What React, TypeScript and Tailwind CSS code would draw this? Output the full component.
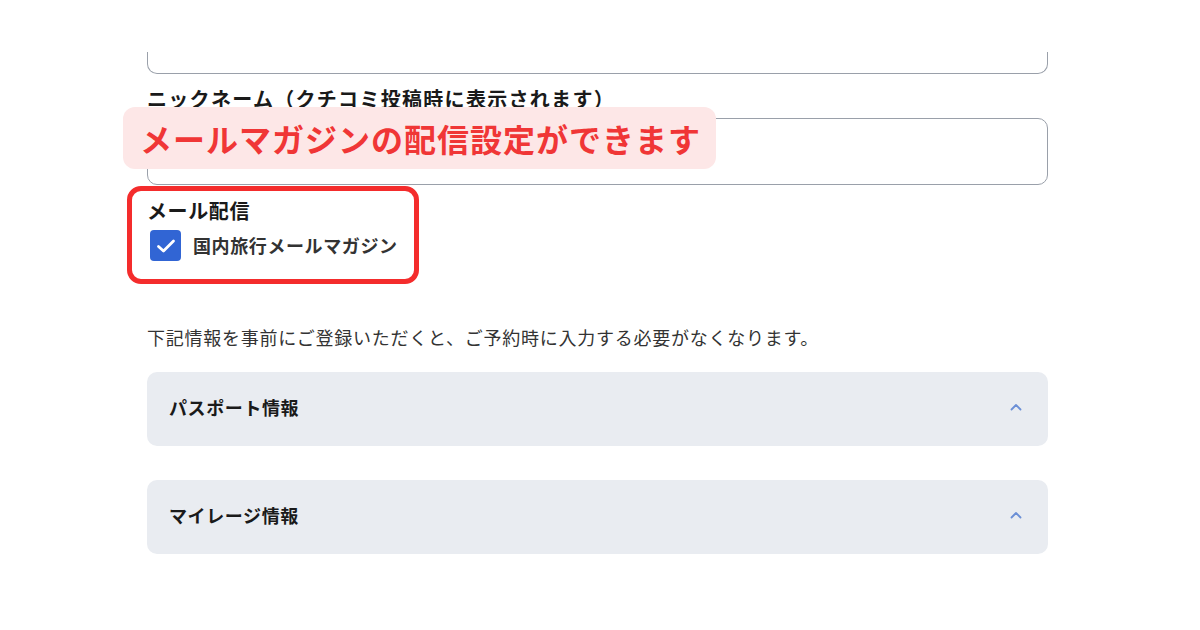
import React from "react";

const font = { fontFamily: '"Noto Sans CJK JP", "Noto Sans", sans-serif' };

function Chevron() {
  return (
    <svg width="12" height="8" viewBox="0 0 12 8" fill="none">
      <path d="M1.5 6.5 L6 2 L10.5 6.5" stroke="#6b8fd6" strokeWidth="1.8" strokeLinecap="round" strokeLinejoin="round" />
    </svg>
  );
}

function Accordion({ title }: { title: string }) {
  return (
    <div className="flex h-[74px] items-center justify-between rounded-[10px] bg-[#e9ecf1] pb-[4px] pl-[22px] pr-[26px]">
      <span className="text-[18px] font-bold leading-[24px] tracking-[0.6px] text-[#1a1a1a]">{title}</span>
      <Chevron />
    </div>
  );
}

export default function App() {
  return (
    <div className="h-[630px] w-[1200px] overflow-hidden bg-white" style={font}>
      <div className="relative ml-[147px] w-[901px] pt-[52px]">
        <div className="h-[22px] rounded-b-[10px] border-x border-b border-[#9aa0aa]" />
        <div className="mt-[12px] text-[20px] font-bold leading-[26px] tracking-[1.3px] text-[#1a1a1a]">
          ニックネーム（クチコミ投稿時に表示されます）
        </div>
        <div className="mt-[6px] h-[67px] rounded-[10px] border border-[#9aa0aa]" />

        <div className="relative mt-[13px]">
          <div className="text-[20px] font-bold leading-[26px] tracking-[0.6px] text-[#1a1a1a]">メール配信</div>
          <div className="mt-[6px] flex items-center gap-[12px] pl-[3px]">
            <div className="flex h-[31px] w-[31px] items-center justify-center rounded-[4px] bg-[#3165d4]">
              <svg width="20" height="16" viewBox="0 0 20 16" fill="none">
                <path d="M2.5 8.5 L7.5 13 L17.5 3" stroke="white" strokeWidth="2.8" strokeLinecap="round" strokeLinejoin="round" />
              </svg>
            </div>
            <span className="text-[18px] font-bold tracking-[0.6px] text-[#333]">国内旅行メールマガジン</span>
          </div>
          <div className="pointer-events-none absolute -left-[20px] -top-[12px] h-[98px] w-[292px] rounded-[14px] border-[5px] border-[#f42c2c]" />
        </div>

        <p className="mt-[64px] text-[18px] leading-[24px] tracking-[0.75px] text-[#333]">
          下記情報を事前にご登録いただくと、ご予約時に入力する必要がなくなります。
        </p>

        <div className="mt-[23px] flex flex-col gap-[34px]">
          <Accordion title="パスポート情報" />
          <Accordion title="マイレージ情報" />
        </div>

        <div className="absolute -left-[24px] top-[107px] flex h-[62px] w-[593px] items-center rounded-[12px] bg-[#fde7e7] pl-[17px]">
          <span className="text-[32px] font-bold tracking-[1px] text-[#f03636]">メールマガジンの配信設定ができます</span>
        </div>
      </div>
    </div>
  );
}
